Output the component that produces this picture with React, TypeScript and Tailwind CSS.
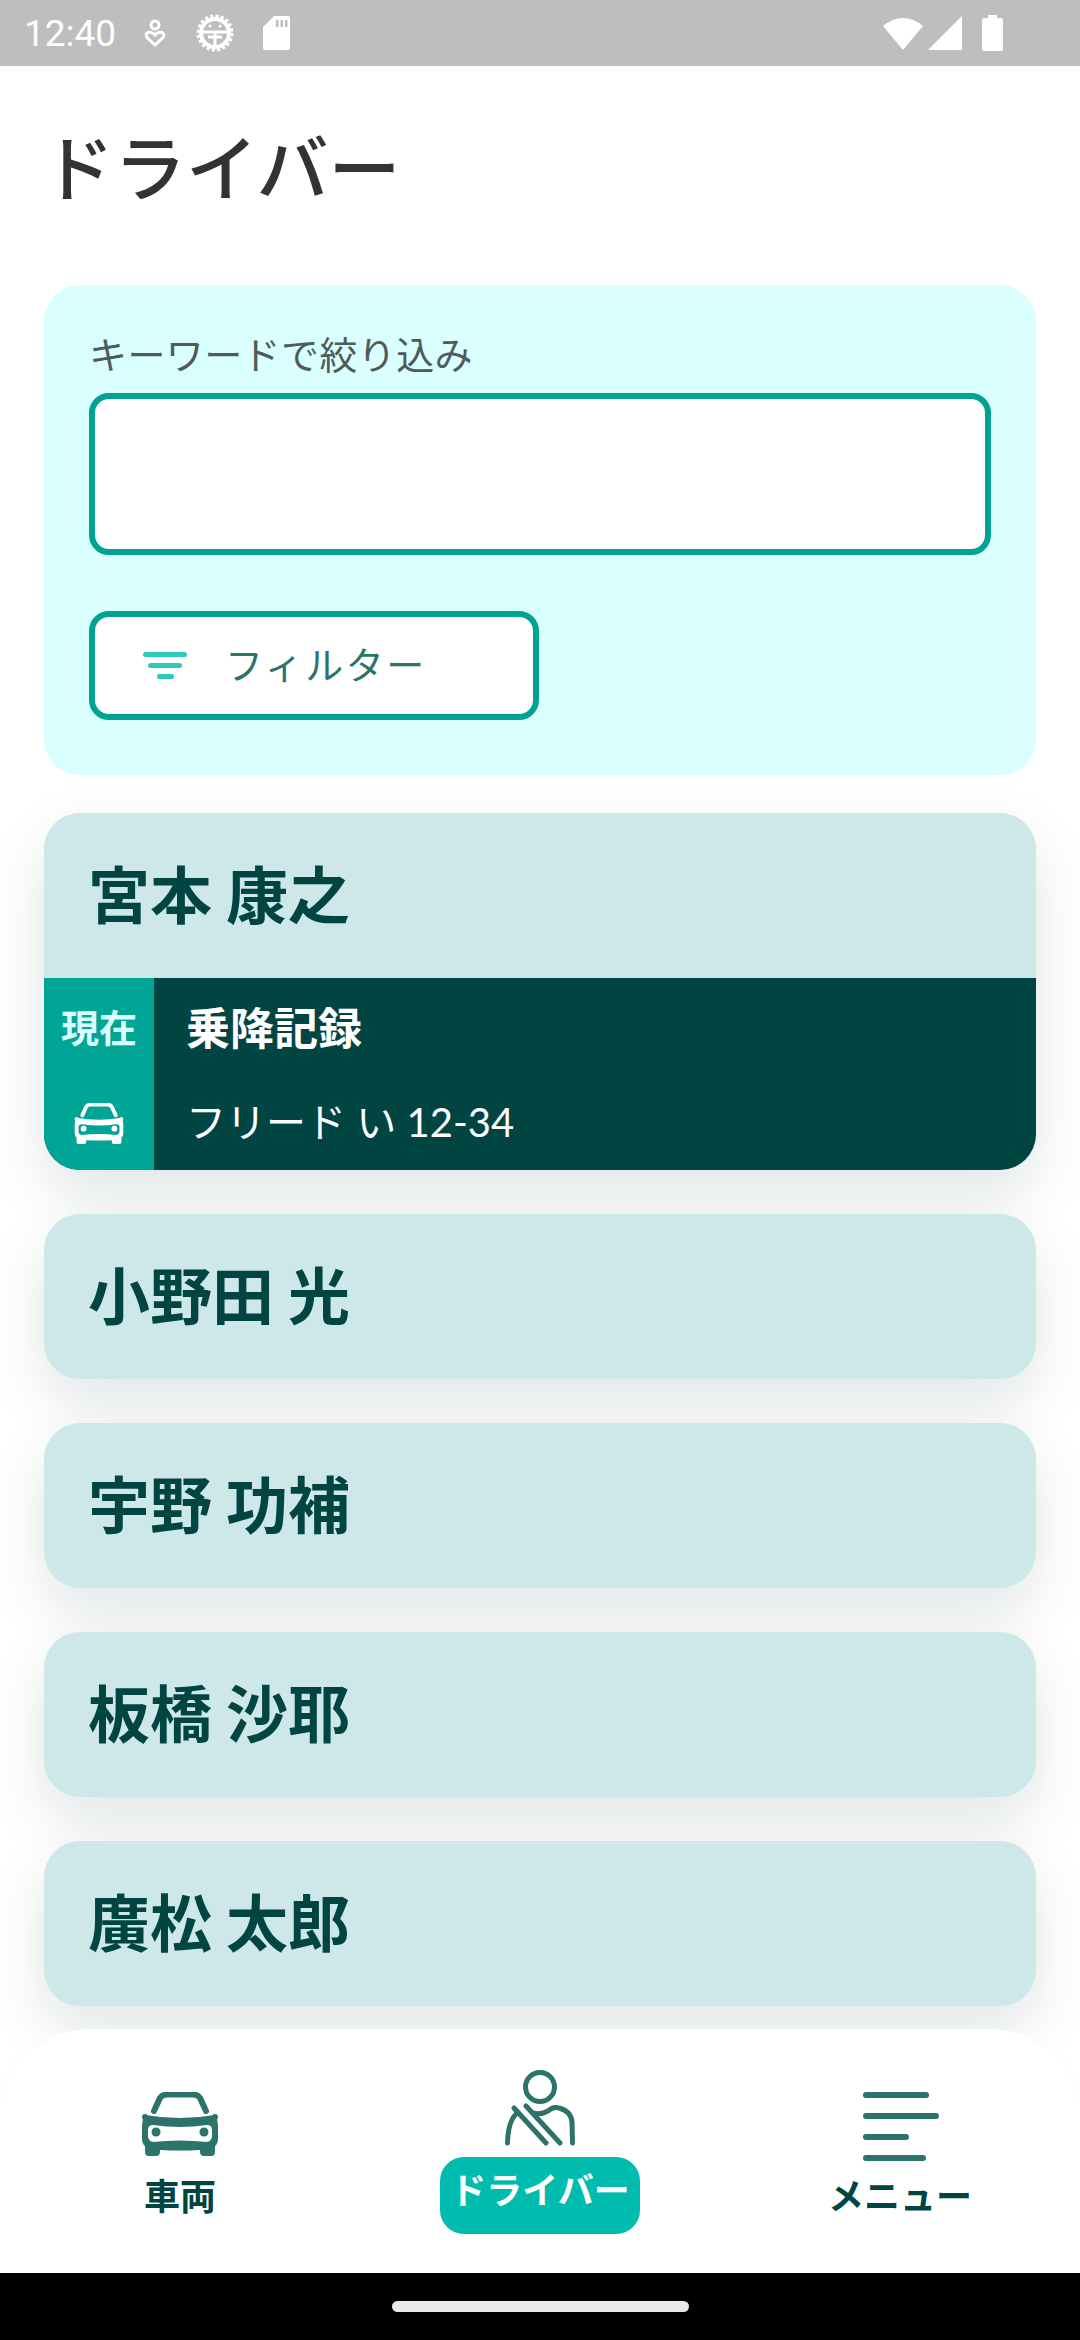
import React from 'react';

const jp = { fontFamily: '"Noto Sans CJK JP", sans-serif' };

const names = ['小野田 光', '宇野 功補', '板橋 沙耶', '廣松 太郎'];

const CarIcon = ({ className }: { className: string }) => (
  <svg viewBox="0 0 76 64" className={className} fill="currentColor">
    <path d="M12 19 L18 6 Q20 2.500 25 2.500 H51 Q56 2.500 58 6 L64 19" fill="none" stroke="currentColor" strokeWidth="6" strokeLinecap="round" />
    <path
      fillRule="evenodd"
      d="M3 23 Q38 29 73 23 Q76 27 76 36 V46 Q76 52 73 54 V60 Q73 64 69 64 H62 Q58 64 58 60 V58 Q38 59 18 58 V60 Q18 64 14 64 H7 Q3 64 3 60 V54 Q0 52 0 46 V36 Q0 27 3 23Z M11 33 Q38 37 65 33 Q70 33 70 38 V44 Q70 49 65 50 Q38 47 11 50 Q6 49 6 44 V38 Q6 33 11 33Z"
    />
    <circle cx="14" cy="40" r="4.500" />
    <circle cx="62" cy="40" r="4.500" />
    <circle cx="3" cy="25" r="3" />
    <circle cx="73" cy="25" r="3" />
  </svg>
);

const PersonIcon = () => (
  <svg viewBox="0 0 70 76" className="w-[70px] h-[76px] text-[#2c736b]" fill="none" stroke="currentColor" strokeWidth="5" strokeLinecap="round">
    <circle cx="35" cy="17" r="14.500" />
    <path d="M28 43 Q36 45 43 41 Q48 36 54 38 Q66 41 67 52 L67.500 73" />
    <path d="M11 44 Q3 52 2.500 73" />
    <path d="M9 38 L41 73" />
    <path d="M21 36 L55 73" />
  </svg>
);

const MenuIcon = () => (
  <div className="flex flex-col gap-[15px]">
    <div className="w-[66px] h-[6px] rounded-full bg-[#2c736b]" />
    <div className="w-[76px] h-[6px] rounded-full bg-[#2c736b]" />
    <div className="w-[46px] h-[6px] rounded-full bg-[#2c736b]" />
    <div className="w-[63px] h-[6px] rounded-full bg-[#2c736b]" />
  </div>
);

const StatusBar = () => (
  <div className="h-[66px] shrink-0 bg-[#bebebe] flex items-center justify-between pl-[24px] pr-[77px] text-white">
    <div className="flex items-center">
      <span className="text-[37px] leading-none" style={{ fontFamily: 'Roboto, sans-serif' }}>12:40</span>
      <svg viewBox="0 0 22 28" className="w-[22px] h-[28px] ml-[28px]" fill="none" stroke="currentColor" strokeWidth="3">
        <circle cx="11" cy="6" r="4" />
        <path d="M11 26 L3 18.500 Q1 15 4 13.500 Q8 12.500 11 16 Q14 12.500 18 13.500 Q21 15 19 18.500Z" />
      </svg>
      <svg viewBox="0 0 38 38" className="w-[38px] h-[38px] ml-[30px]" fill="none" stroke="currentColor">
        <circle cx="19" cy="19" r="14" strokeWidth="4" />
        <circle cx="19" cy="19" r="16.500" strokeWidth="4" strokeDasharray="3 2.180" />
        <path d="M6 18 H32 M12 23 H26 M19 18 V33" strokeWidth="3" />
        <circle cx="14" cy="12" r="1.500" fill="currentColor" stroke="none" />
        <circle cx="24" cy="12" r="1.500" fill="currentColor" stroke="none" />
      </svg>
      <svg viewBox="0 0 27 34" className="w-[27px] h-[34px] ml-[29px]">
        <path fill="currentColor" fillRule="evenodd" d="M11 0 H25 Q27 0 27 2 V32 Q27 34 25 34 H2 Q0 34 0 32 V11Z M13 4 V11 H15.500 V4Z M17.500 4 V11 H20 V4Z M22 4 V11 H24.500 V4Z" />
      </svg>
    </div>
    <div className="flex items-center">
      <svg viewBox="0 0 40 34" className="w-[40px] h-[34px]">
        <path fill="currentColor" d="M0 10 Q20 -6 40 10 L20 34Z" />
      </svg>
      <svg viewBox="0 0 34 34" className="w-[34px] h-[34px] ml-[5px]">
        <path fill="currentColor" d="M34 0 V34 H0Z" />
      </svg>
      <svg viewBox="0 0 21 36" className="w-[21px] h-[36px] ml-[20px]">
        <path fill="currentColor" d="M6 0 H15 V3 H19 Q21 3 21 5 V34 Q21 36 19 36 H2 Q0 36 0 34 V5 Q0 3 2 3 H6Z" />
      </svg>
    </div>
  </div>
);

const DriverCard = ({ name }: { name: string }) => (
  <div className="h-[165px] rounded-[36px] bg-[#cee7e8] shadow-[0_24px_60px_rgba(0,50,50,0.12)] flex items-center pl-[44px] pb-[8px]">
    <span className="text-[62px] leading-none font-bold text-[#004542] whitespace-pre">{name}</span>
  </div>
);

export default function App() {
  return (
    <div className="w-[1080px] h-[2340px] flex flex-col overflow-hidden bg-white" style={jp}>
      <StatusBar />

      <main className="flex-1 min-h-0 overflow-hidden px-[44px]">
        <h1 className="mt-[48px] -ml-[2px] text-[72px] leading-[100px] font-medium text-[#333333]">ドライバー</h1>

        <section className="mt-[71px] h-[490px] rounded-[36px] bg-[#d9ffff] px-[45px] pt-[46px]">
          <div className="text-[38px] leading-[44px] tracking-[0.4px] text-[#4f5a5a] whitespace-nowrap">キーワードで絞り込み</div>
          <div className="mt-[18px] h-[162px] rounded-[20px] border-[6px] border-[#00a392] bg-white" />
          <button className="mt-[56px] w-[450px] h-[109px] rounded-[20px] border-[6px] border-[#00a392] bg-white flex items-center pl-[48px]">
            <span className="w-[44px] flex flex-col items-center gap-[6px]">
              <span className="w-[44px] h-[5px] rounded-full bg-[#2ecbbd]" />
              <span className="w-[34px] h-[5px] rounded-full bg-[#2ecbbd]" />
              <span className="w-[17px] h-[5px] rounded-[2px] bg-[#2ecbbd]" />
            </span>
            <span className="ml-[38px] mb-[6px] text-[38px] leading-none text-[#2c736b] tracking-[2.500px]">フィルター</span>
          </button>
        </section>

        <div className="mt-[38px] rounded-[36px] overflow-hidden bg-[#cee7e8] shadow-[0_24px_60px_rgba(0,50,50,0.12)]">
          <div className="h-[165px] flex items-center pl-[44px] pb-[8px]">
            <span className="text-[62px] leading-none font-bold text-[#004542] whitespace-pre">宮本 康之</span>
          </div>
          <div className="h-[192px] flex bg-[#004542] text-white">
            <div className="w-[110px] bg-[#00a595] flex flex-col items-center pt-[25px]">
              <span className="text-[38px] leading-[46px] font-bold text-[#d9ffff]">現在</span>
              <CarIcon className="mt-[54px] w-[50px] h-[41px] text-white" />
            </div>
            <div className="pl-[32px] pt-[23px]">
              <div className="text-[44px] leading-[50px] font-bold">乗降記録</div>
              <div className="mt-[48px] text-[40px] leading-[46px] whitespace-pre" style={{ fontFamily: 'Lato, "Noto Sans CJK JP", sans-serif' }}>フリード い 12-34</div>
            </div>
          </div>
        </div>

        <div className="mt-[44px] flex flex-col gap-[44px]">
          {names.map(name => (
            <DriverCard key={name} name={name} />
          ))}
          <div className="h-[165px] rounded-[36px] bg-[#cee7e8] shadow-[0_24px_60px_rgba(0,50,50,0.12)]" />
        </div>
      </main>

      <nav className="relative z-10 -mt-[244px] h-[244px] shrink-0 rounded-t-[90px] bg-white grid grid-cols-3">
        <div className="flex flex-col items-center pt-[63px]">
          <CarIcon className="w-[76px] h-[64px] text-[#2c736b]" />
          <span className="mt-[16px] text-[36px] leading-[44px] font-bold text-[#004542]">車両</span>
        </div>
        <div className="flex flex-col items-center pt-[41px]">
          <PersonIcon />
          <div className="mt-[11px] w-[200px] h-[77px] rounded-[24px] bg-[#00bcae] text-center text-[36px] leading-[62px] font-bold text-white whitespace-nowrap">ドライバー</div>
        </div>
        <div className="flex flex-col items-center pt-[63px]">
          <div className="w-[76px] ml-[2px]"><MenuIcon /></div>
          <span className="mt-[11px] text-[36px] leading-[44px] font-bold text-[#004542] whitespace-nowrap">メニュー</span>
        </div>
      </nav>

      <div className="h-[67px] shrink-0 bg-black flex justify-center pt-[28px]">
        <div className="w-[297px] h-[11px] rounded-full bg-[#e8e8e8]" />
      </div>
    </div>
  );
}
